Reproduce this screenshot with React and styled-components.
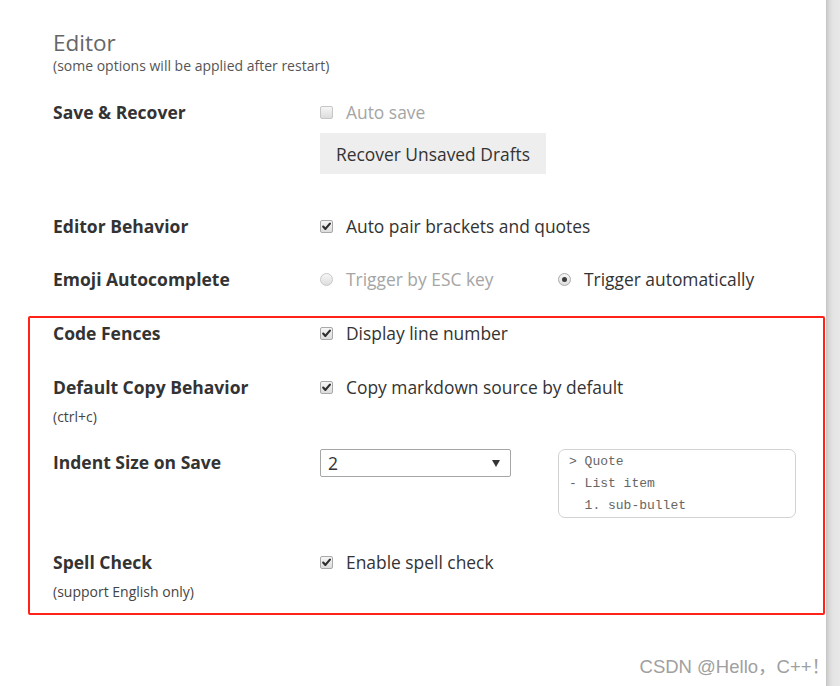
import React from "react";
import styled, { createGlobalStyle } from "styled-components";

const Global = createGlobalStyle`
  html, body { margin: 0; padding: 0; background: #fff; }
  body { font-family: "Open Sans", "Noto Sans", sans-serif; }
  #root { height: 686px; }
`;

const Page = styled.div`
  display: flex;
  width: 840px;
  height: 686px;
  overflow: hidden;
  position: relative;
`;

const Main = styled.main`
  flex: 1;
  background: #fff;
  padding-top: 28px;
`;

const Strip = styled.div`
  width: 14px;
  background: linear-gradient(to right, #c4c4c4 0px, #d8d8d8 3px, #e4e4e4 7px, #e8e8e8 14px);
`;

const Header = styled.header`
  margin-left: 53px;
`;

const Title = styled.h2`
  margin: 0;
  font-size: 22.5px;
  line-height: 29px;
  font-weight: 400;
  color: #666;
`;

const Subtitle = styled.div`
  font-size: 14px;
  line-height: 18px;
  color: #555;
`;

const Row = styled.div`
  display: grid;
  grid-template-columns: 267px 238px 238px;
  align-items: start;
  margin-top: ${(p) => p.$top}px;
  margin-left: ${(p) => (p.$inGroup ? 0 : 53)}px;
`;

const LabelCell = styled.div`
  display: flex;
  flex-direction: column;
  padding-top: ${(p) => p.$pad || 0}px;
`;

const Label = styled.div`
  font-size: 17.5px;
  line-height: 24px;
  font-weight: 700;
  color: #333;
`;

const Note = styled.div`
  margin-top: 9px;
  font-size: 14px;
  line-height: 18px;
  color: #444;
`;

const ControlCell = styled.div`
  display: flex;
  flex-direction: column;
  align-items: flex-start;
`;

const Option = styled.label`
  display: flex;
  align-items: center;
  gap: 13px;
  height: 24px;
  font-size: 17.4px;
  color: ${(p) => (p.$disabled ? "#a5a5a5" : "#333")};
  white-space: nowrap;
`;

const Box = styled.span`
  width: 11px;
  height: 11px;
  border: 1px solid ${(p) => (p.$disabled ? "#c6c6c6" : "#a9a9a9")};
  border-radius: 2px;
  background: linear-gradient(#f6f6f6, #dcdcdc);
  display: inline-flex;
  align-items: center;
  justify-content: center;
  flex: none;
`;

const Round = styled.span`
  width: 11px;
  height: 11px;
  border: 1px solid ${(p) => (p.$disabled ? "#c8c8c8" : "#aaa")};
  border-radius: 50%;
  background: linear-gradient(#f6f6f6, #dedede);
  display: inline-flex;
  align-items: center;
  justify-content: center;
  flex: none;
`;

const Dot = styled.span`
  width: 5px;
  height: 5px;
  border-radius: 50%;
  background: #3c3c3c;
`;

const Button = styled.button`
  margin-top: 9px;
  height: 41px;
  padding: 0 16px;
  border: none;
  background: #eeeeee;
  font-family: inherit;
  font-size: 17.4px;
  color: #333;
`;

const Select = styled.div`
  box-sizing: border-box;
  width: 191px;
  height: 28px;
  border: 1px solid #a6a6a6;
  border-radius: 2px;
  display: flex;
  align-items: center;
  justify-content: space-between;
  padding: 0 10px 0 7px;
  font-size: 17.5px;
  color: #333;
`;

const CodeBox = styled.pre`
  box-sizing: border-box;
  margin: 0;
  width: 238px;
  height: 69px;
  border: 1px solid #d2d2d2;
  border-radius: 7px;
  padding: 1px 10px 0;
  font-family: "Liberation Mono", "Courier New", monospace;
  font-size: 13px;
  line-height: 22px;
  color: #666;
`;

const Group = styled.section`
  margin: 25px 1px 0 28px;
  border: 2px solid #ff2218;
  border-radius: 2px;
  padding: 3px 0 12px 23px;
`;

const Watermark = styled.div`
  position: absolute;
  right: 10px;
  top: 655px;
  font-family: "Liberation Sans", "Noto Sans CJK SC", sans-serif;
  font-size: 18.5px;
  line-height: 24px;
  color: #a0a0a0;
  white-space: nowrap;
`;

const Check = ({ checked, disabled }) => (
  <Box $disabled={disabled}>
    {checked && (
      <svg width="11" height="11" viewBox="0 0 11 11">
        <path d="M2.2 5.6 L4.4 7.9 L8.9 2.6" fill="none" stroke="#2e2e2e" strokeWidth="2.2" strokeLinecap="round" strokeLinejoin="round" />
      </svg>
    )}
  </Box>
);

const Radio = ({ checked, disabled }) => (
  <Round $disabled={disabled}>{checked && <Dot />}</Round>
);

const Arrow = () => (
  <svg width="8" height="7" viewBox="0 0 8 7">
    <polygon points="0,0 8,0 4,7" fill="#333" />
  </svg>
);

export default function App() {
  return (
    <>
      <Global />
      <Page>
        <Main>
          <Header>
            <Title>Editor</Title>
            <Subtitle>(some options will be applied after restart)</Subtitle>
          </Header>

          <Row $top={25}>
            <LabelCell>
              <Label>Save &amp; Recover</Label>
            </LabelCell>
            <ControlCell>
              <Option $disabled>
                <Check disabled />
                Auto save
              </Option>
              <Button>Recover Unsaved Drafts</Button>
            </ControlCell>
          </Row>

          <Row $top={40}>
            <LabelCell>
              <Label>Editor Behavior</Label>
            </LabelCell>
            <ControlCell>
              <Option>
                <Check checked />
                Auto pair brackets and quotes
              </Option>
            </ControlCell>
          </Row>

          <Row $top={29}>
            <LabelCell>
              <Label>Emoji Autocomplete</Label>
            </LabelCell>
            <ControlCell>
              <Option $disabled>
                <Radio disabled />
                Trigger by ESC key
              </Option>
            </ControlCell>
            <ControlCell>
              <Option>
                <Radio checked />
                Trigger automatically
              </Option>
            </ControlCell>
          </Row>

          <Group>
            <Row $top={0} $inGroup>
              <LabelCell>
                <Label>Code Fences</Label>
              </LabelCell>
              <ControlCell>
                <Option>
                  <Check checked />
                  Display line number
                </Option>
              </ControlCell>
            </Row>

            <Row $top={30} $inGroup>
              <LabelCell>
                <Label>Default Copy Behavior</Label>
                <Note>(ctrl+c)</Note>
              </LabelCell>
              <ControlCell>
                <Option>
                  <Check checked />
                  Copy markdown source by default
                </Option>
              </ControlCell>
            </Row>

            <Row $top={23} $inGroup>
              <LabelCell $pad={1}>
                <Label>Indent Size on Save</Label>
              </LabelCell>
              <ControlCell>
                <Select>
                  <span>2</span>
                  <Arrow />
                </Select>
              </ControlCell>
              <ControlCell>
                <CodeBox>{"> Quote\n- List item\n  1. sub-bullet"}</CodeBox>
              </ControlCell>
            </Row>

            <Row $top={32} $inGroup>
              <LabelCell>
                <Label>Spell Check</Label>
                <Note>(support English only)</Note>
              </LabelCell>
              <ControlCell>
                <Option>
                  <Check checked />
                  Enable spell check
                </Option>
              </ControlCell>
            </Row>
          </Group>
        </Main>
        <Strip />
        <Watermark>CSDN @Hello，C++！</Watermark>
      </Page>
    </>
  );
}
